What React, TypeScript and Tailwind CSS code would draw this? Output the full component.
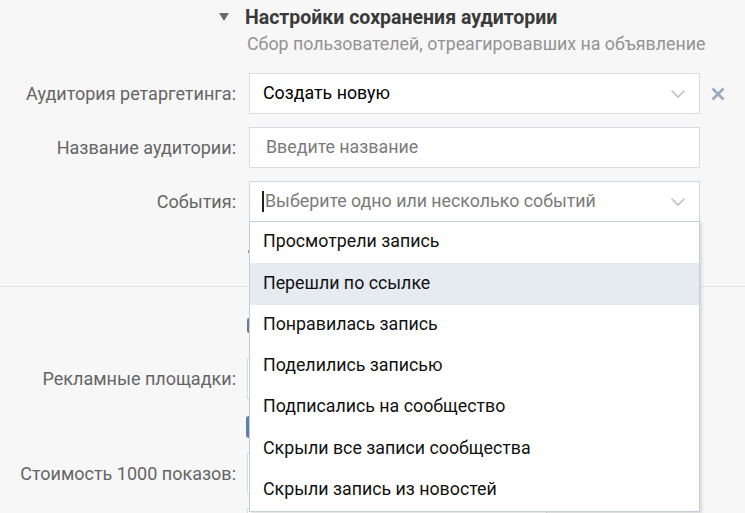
import React from "react";

const font = { fontFamily: "Roboto, 'Open Sans', sans-serif" };

function Chevron() {
  return (
    <svg width="16" height="10" viewBox="0 0 16 10" className="shrink-0">
      <path d="M1.5 1.5 L8 8 L14.5 1.5" fill="none" stroke="#b9c3cd" strokeWidth="1.6" />
    </svg>
  );
}

function Cross() {
  return (
    <svg width="14" height="14" viewBox="0 0 14 14">
      <path d="M1.5 1.5 L12.5 12.5 M12.5 1.5 L1.5 12.5" stroke="#9aabbf" strokeWidth="2.8" strokeLinecap="butt" />
    </svg>
  );
}

function Row({ label, children }: { label: string; children?: React.ReactNode }) {
  return (
    <div className="flex items-center">
      <div className="w-[236px] shrink-0 whitespace-nowrap text-right text-[18px] text-[#656565]">{label}</div>
      <div className="ml-[13px] flex items-center">{children}</div>
    </div>
  );
}

const events = [
  "Просмотрели запись",
  "Перешли по ссылке",
  "Понравилась запись",
  "Поделились записью",
  "Подписались на сообщество",
  "Скрыли все записи сообщества",
  "Скрыли запись из новостей",
];

export default function App() {
  return (
    <div className="h-[513px] w-[745px] overflow-hidden bg-[#f7f7f7]" style={font}>
      {/* audience saving settings */}
      <div className="flex pt-[7px]">
        <div className="ml-[219px] mt-[6px] h-0 w-0 border-x-[5px] border-t-[8px] border-x-transparent border-t-[#6b6b6b]" />
        <div className="ml-[16px]">
          <div className="text-[19.5px] font-bold leading-[22px] text-[#3a3a3a]">Настройки сохранения аудитории</div>
          <div className="ml-[2px] mt-[6px] text-[17.8px] leading-[18px] text-[#939393]">
            Сбор пользователей, отреагировавших на объявление
          </div>
        </div>
      </div>

      <div className="mt-[20px] flex flex-col gap-[13px]">
        <Row label="Аудитория ретаргетинга:">
          <div className="flex h-[41px] w-[451px] items-center justify-between border border-[#d8dde3] bg-white pl-[13px] pr-[13px] text-[17.8px] text-black">
            <span>Создать новую</span>
            <Chevron />
          </div>
          <div className="ml-[11px]">
            <Cross />
          </div>
        </Row>
        <Row label="Название аудитории:">
          <div className="flex h-[41px] w-[451px] items-center border border-[#d8dde3] bg-white pl-[16px] text-[17.8px] text-[#7b7b7b]">
            Введите название
          </div>
        </Row>
        <Row label="События:">
          <div className="relative">
            <div className="flex h-[41px] w-[451px] items-center justify-between border border-[#d0d7df] bg-white pl-[12px] pr-[13px] text-[17.8px] text-[#7b7b7b]">
              <span className="flex items-center">
                <span className="mr-px h-[21px] w-[2px] bg-[#222]" />
                Выберите одно или несколько событий
              </span>
              <Chevron />
            </div>
            {/* open event list */}
            <div className="absolute left-0 top-[40px] z-10 w-[451px] border border-[#c5ced8] bg-white shadow-[2px_2px_3px_rgba(0,0,0,0.12)]">
              {events.map((e, i) => (
                <div
                  key={e}
                  className={
                    "flex h-[41.3px] items-center pb-[2px] pl-[13px] text-[17.8px] text-[#111] " +
                    (i === 1 ? "bg-[#e5ebf1]" : "")
                  }
                >
                  {e}
                </div>
              ))}
            </div>
          </div>
        </Row>
      </div>

      <div className="ml-[248px] mt-[28px] h-[3px] w-[3px] bg-[#e08a55]" />

      <div className="mt-[33px] h-px w-full bg-[#dfe2e6]" />

      {/* ad placement settings beneath the list */}
      <div className="ml-[247px] mt-[31px] h-[15px] w-[15px] rounded-[2px] border-2 border-[#6f7f90] bg-white" />
      <div className="mt-[25px]">
        <Row label="Рекламные площадки:">
          <div className="-ml-[2px] h-[41px] w-[300px] border border-[#d8dde3] bg-white" />
        </Row>
      </div>
      <div className="ml-[246px] mt-[17px] h-[22px] w-[120px] rounded-[3px] bg-[#5d81a8]" />
      <div className="mt-[15px]">
        <Row label="Стоимость 1000 показов:">
          <div className="-ml-[2px] h-[41px] w-[300px] border border-[#d8dde3] bg-white" />
        </Row>
      </div>
      <div className="ml-[247px] mt-[14px] h-[41px] w-[300px] border border-[#d8dde3] bg-white" />
    </div>
  );
}
